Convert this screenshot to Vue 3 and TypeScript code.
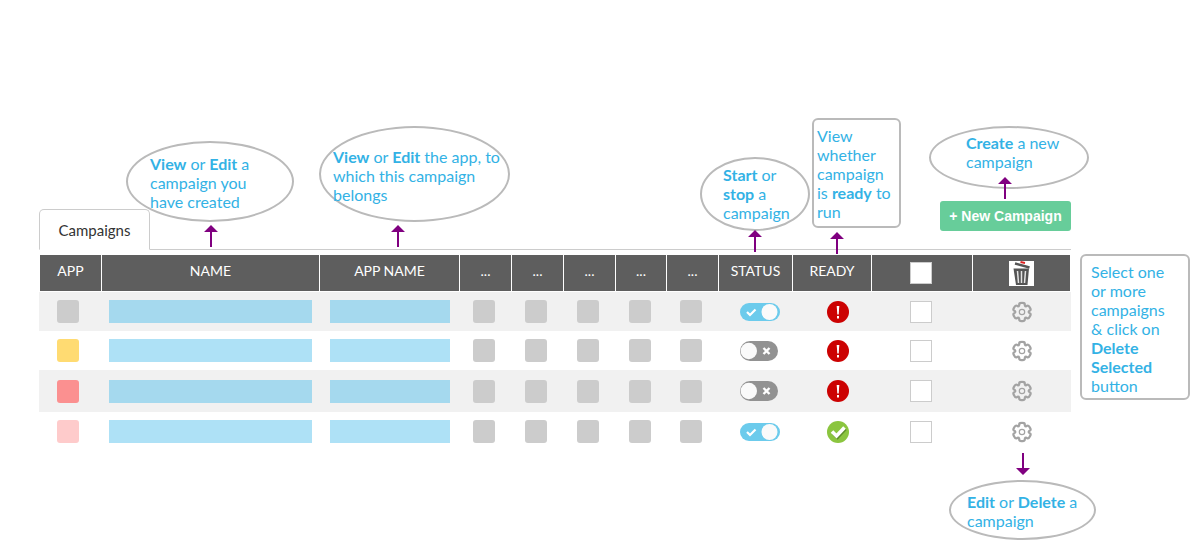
<script setup lang="ts">
import { ref } from 'vue'

interface Campaign {
  id: number
  tint: string
  running: boolean
  ready: boolean
  selected: boolean
}

const campaigns = ref<Campaign[]>([
  { id: 1, tint: 'grey', running: true, ready: false, selected: false },
  { id: 2, tint: 'yellow', running: false, ready: false, selected: false },
  { id: 3, tint: 'red', running: false, ready: false, selected: false },
  { id: 4, tint: 'pink', running: true, ready: true, selected: false },
])

const allSelected = ref(false)
const extraColumns = [1, 2, 3, 4, 5]

function toggleAll() {
  campaigns.value.forEach((c) => (c.selected = allSelected.value))
}

// Six-lobed gear outline centred on the origin.
function buildGear(): string {
  const at = (radius: number, degrees: number) => {
    const a = (degrees * Math.PI) / 180
    return `${(radius * Math.cos(a)).toFixed(2)} ${(radius * Math.sin(a)).toFixed(2)}`
  }
  let d = `M${at(6.6, -120)}`
  for (let k = 0; k < 6; k++) {
    const c = -90 + k * 60
    d += ` Q${at(7, c - 22)} ${at(8.2, c - 20)} Q${at(9.6, c - 16)} ${at(9, c)}`
    d += ` Q${at(9.6, c + 16)} ${at(8.2, c + 20)} Q${at(7, c + 22)} ${at(6.6, c + 30)}`
  }
  return d + 'Z'
}
const gear = buildGear()
</script>

<template>
  <main class="page">
    <section class="panel">
      <header class="toolbar">
        <nav><a class="tab" href="#campaigns">Campaigns</a></nav>
        <div class="create">
          <button type="button" class="new">+ New Campaign</button>
          <p class="note oval note-create"><b>Create</b> a new<br />campaign</p>
          <svg class="arrow arrow-create" viewBox="0 0 14 22"><path d="M7 0l7 7H8v15H6V7H0z" /></svg>
        </div>
      </header>

      <table id="campaigns">
        <colgroup>
          <col class="w-app" /><col class="w-name" /><col class="w-appname" />
          <col class="w-extra" /><col class="w-extra" /><col class="w-extra" /><col class="w-extra4" /><col class="w-extra" />
          <col class="w-status" /><col class="w-ready" /><col class="w-select" /><col class="w-actions" />
        </colgroup>
        <thead>
          <tr>
            <th scope="col">APP</th>
            <th scope="col">
              NAME
              <p class="note oval note-name"><b>View</b> or <b>Edit</b> a<br />campaign you<br />have created</p>
              <svg class="arrow arrow-name" viewBox="0 0 14 22"><path d="M7 0l7 7H8v15H6V7H0z" /></svg>
            </th>
            <th scope="col">
              APP NAME
              <p class="note oval note-app"><b>View</b> or <b>Edit</b> the app, to<br />which this campaign<br />belongs</p>
              <svg class="arrow arrow-app" viewBox="0 0 14 22"><path d="M7 0l7 7H8v15H6V7H0z" /></svg>
            </th>
            <th v-for="n in extraColumns" :key="n" scope="col">...</th>
            <th scope="col">
              STATUS
              <p class="note oval note-status"><b>Start</b> or<br /><b>stop</b> a<br />campaign</p>
              <svg class="arrow arrow-status" viewBox="0 0 14 22"><path d="M7 0l7 7H8v15H6V7H0z" /></svg>
            </th>
            <th scope="col">
              READY
              <p class="note box note-ready">View<br />whether<br />campaign<br />is <b>ready</b> to<br />run</p>
              <svg class="arrow arrow-ready" viewBox="0 0 14 22"><path d="M7 0l7 7H8v15H6V7H0z" /></svg>
            </th>
            <th scope="col" class="tool select">
              <input v-model="allSelected" type="checkbox" class="check" aria-label="Select all campaigns" @change="toggleAll" />
            </th>
            <th scope="col" class="tool">
              <button type="button" class="trash" aria-label="Delete Selected">
                <svg viewBox="0 0 25 25">
                  <path d="M11.500 1l4.500 1" stroke="#d22" stroke-width="1.800" />
                  <path d="M6 2.500l14.500 4" stroke="#555" stroke-width="2.400" />
                  <path d="M4.500 7.500h15.500l-1.500 16.500H7z" fill="#555" />
                  <path d="M8.500 10l1 12M12.500 10v12M16.500 10l-1 12" stroke="#e4e4e4" stroke-width="1.500" />
                </svg>
              </button>
            </th>
          </tr>
        </thead>
        <tbody>
          <tr v-for="c in campaigns" :key="c.id">
            <td class="app"><span class="tile" :class="c.tint"></span></td>
            <td class="name"><span class="bar"></span></td>
            <td class="appname"><span class="bar"></span></td>
            <td v-for="n in extraColumns" :key="n" class="extra"><span class="tile grey"></span></td>
            <td class="status">
              <label class="switch">
                <input v-model="c.running" type="checkbox" :aria-label="`Run campaign ${c.id}`" />
                <svg v-if="c.running" viewBox="0 0 40 20">
                  <rect x="0" y="1" width="40" height="18" rx="9" fill="#6ccbec" />
                  <circle cx="29.500" cy="10" r="8" fill="#fafafa" />
                  <path d="M7 10l3 3 5.500-5.500" stroke="#fff" stroke-width="2.200" fill="none" />
                </svg>
                <svg v-else viewBox="0 0 40 20">
                  <rect x="0" y="0" width="38" height="20" rx="10" fill="#929292" />
                  <circle cx="8.800" cy="10" r="8.200" fill="#fafafa" />
                  <path d="M23.500 7l6 6M29.500 7l-6 6" stroke="#fff" stroke-width="2.400" />
                </svg>
              </label>
            </td>
            <td class="ready">
              <svg v-if="c.ready" class="state" viewBox="0 0 22 22" role="img" aria-label="Ready">
                <circle cx="11" cy="11" r="11" fill="#8bc53f" />
                <path d="M6 12l4.500 4.500L18.500 8" stroke="#5f8f2a" stroke-width="3.200" fill="none" />
                <path d="M5 10.500l4.500 4.500L17.500 6.500" stroke="#fff" stroke-width="3.600" fill="none" />
              </svg>
              <svg v-else class="state" viewBox="0 0 22 22" role="img" aria-label="Not ready">
                <circle cx="11" cy="11" r="11" fill="#cc0202" />
                <path d="M9.700 5h2.600l-.6 8.500h-1.400z" fill="#fff" />
                <rect x="10" y="15" width="2" height="2.500" fill="#fff" />
              </svg>
            </td>
            <td class="select">
              <input v-model="c.selected" type="checkbox" class="check" :aria-label="`Select campaign ${c.id}`" />
            </td>
            <td>
              <button type="button" class="gear" :aria-label="`Edit or delete campaign ${c.id}`">
                <svg viewBox="-11 -11 22 22">
                  <path :d="gear" fill="none" stroke="#a3a3a3" stroke-width="2.200" />
                  <circle r="2.700" fill="none" stroke="#a3a3a3" stroke-width="1.200" />
                </svg>
              </button>
            </td>
          </tr>
        </tbody>
      </table>

      <p class="note box note-delete">Select one<br />or more<br />campaigns<br />&amp; click on<br /><b>Delete</b><br /><b>Selected</b><br />button</p>
      <div class="row-help">
        <svg class="arrow-down" viewBox="0 0 14 22"><path d="M7 22l7-7H8V0H6v15H0z" /></svg>
        <p class="note oval note-edit"><b>Edit</b> or <b>Delete</b> a<br />campaign</p>
      </div>
    </section>
  </main>
</template>

<style>
body {
  margin: 0;
  background: #fff;
}
</style>

<style scoped>
.page {
  box-sizing: border-box;
  padding: 201px 119px 0 39px;
  font-family: Lato, "Open Sans", sans-serif;
}
.panel {
  position: relative;
}
.toolbar {
  display: flex;
  justify-content: space-between;
  align-items: flex-end;
  height: 48px;
  border-bottom: 1px solid #ccc;
}
.tab {
  display: block;
  box-sizing: border-box;
  width: 111px;
  height: 41px;
  margin-bottom: -1px;
  border: 1px solid #ccc;
  border-bottom-color: #fff;
  border-radius: 5px 5px 0 0;
  color: #333;
  font-size: 15px;
  line-height: 40px;
  text-align: center;
  text-decoration: none;
}
.create {
  position: relative;
  align-self: flex-start;
}
.new {
  display: block;
  width: 131px;
  height: 30px;
  padding: 0;
  border: 0;
  border-radius: 3px;
  background: #67cd9a;
  color: #fff;
  font: bold 14px "Liberation Sans", sans-serif;
  white-space: nowrap;
}
table {
  width: 100%;
  margin-top: 5px;
  border-spacing: 0;
  table-layout: fixed;
}
.w-app { width: 63px; }
.w-name { width: 218px; }
.w-appname { width: 140px; }
.w-extra { width: 52px; }
.w-extra4 { width: 51px; }
.w-status { width: 74px; }
.w-ready { width: 79px; }
.w-select { width: 101px; }
.w-actions { width: 98px; }
th {
  position: relative;
  box-sizing: border-box;
  height: 37px;
  padding: 0 0 4px;
  border-right: 1px solid #fff;
  border-bottom: 1px solid #fff;
  background: #5e5e5e;
  color: #fff;
  font-size: 14px;
  font-weight: 400;
  line-height: 20px;
}
th:first-child {
  border-left: 1px solid #fff;
}
th.tool {
  padding-bottom: 0;
}
td {
  height: 39px;
  padding: 0;
  text-align: center;
  vertical-align: middle;
}
tbody tr:nth-child(odd) { background: #f1f1f1; }
tbody tr:nth-child(3) td { height: 42px; }
td.app { padding-right: 5px; }
td.name { padding: 0 8px 0 7px; }
td.appname { padding: 0 10px; }
td.extra { padding-right: 4px; }
td.status { padding-left: 8px; }
td.ready { padding-left: 11px; }
td.select { padding-right: 4px; }
th.select { padding-right: 2px; }
.tile {
  display: block;
  width: 22px;
  height: 23px;
  margin: 0 auto;
  border-radius: 3px;
}
.grey { background: #ccc; }
.yellow { background: #ffdb72; }
.red { background: #fb9090; }
.pink { background: #fecbcb; }
.bar {
  display: block;
  height: 23px;
  background: #aee1f6;
}
tr:nth-child(odd) .bar { background: #a5d9ee; }
.check {
  display: block;
  box-sizing: border-box;
  width: 22px;
  height: 22px;
  margin: 0 auto;
  border: 1px solid #ccc;
  background: #fff;
  appearance: none;
}
.check:checked { background: #6ccbec; }
.switch {
  display: block;
  position: relative;
  width: 40px;
  height: 20px;
  margin: 0 auto;
}
.switch input {
  position: absolute;
  inset: 0;
  width: 100%;
  height: 100%;
  margin: 0;
  opacity: 0;
}
.switch svg,
.state,
.gear svg,
.trash svg {
  display: block;
}
.state {
  width: 22px;
  height: 22px;
  margin: 0 auto;
}
.gear,
.trash {
  display: block;
  width: 22px;
  height: 22px;
  margin: 0 auto;
  padding: 0;
  border: 0;
  background: none;
}
.trash {
  width: 25px;
  height: 25px;
  background: #fff;
}
.note {
  position: absolute;
  box-sizing: border-box;
  margin: 0;
  border: 2px solid #bababa;
  color: #33b2e5;
  font-size: 16px;
  font-weight: 400;
  line-height: 19px;
  text-align: left;
  white-space: nowrap;
}
.oval { border-radius: 50%; }
.box { border-radius: 6px; }
.arrow {
  position: absolute;
  width: 14px;
  height: 22px;
}
.arrow,
.arrow-down {
  fill: #800080;
}
.note-name { left: 24px; top: -114px; width: 168px; height: 81px; padding: 11px 0 0 22px; }
.arrow-name { left: 102px; top: -30px; }
.note-app { left: -1px; top: -129px; width: 191px; height: 96px; padding: 19px 0 0 12px; }
.arrow-app { left: 71px; top: -30px; }
.note-status { left: -19px; top: -98px; width: 110px; height: 74px; padding: 6px 0 0 21px; }
.arrow-status { left: 29px; top: -25px; }
.note-ready { left: 19px; top: -137px; width: 89px; height: 110px; padding: 6px 0 0 3px; }
.arrow-ready { left: 37px; top: -23px; }
.note-create { right: -18px; top: -75px; width: 160px; height: 63px; padding: 5px 0 0 35px; }
.arrow-create { right: 59px; top: -24px; }
.note-delete { right: -119px; top: 53px; width: 110px; height: 146px; padding: 6px 0 0 9px; }
.row-help {
  display: flex;
  flex-direction: column;
  align-items: center;
  gap: 5px;
  width: 147px;
  margin: 2px -25px 0 auto;
}
.arrow-down {
  width: 14px;
  height: 22px;
}
.note-edit {
  position: static;
  width: 147px;
  height: 60px;
  padding: 10px 0 0 16px;
}
</style>
